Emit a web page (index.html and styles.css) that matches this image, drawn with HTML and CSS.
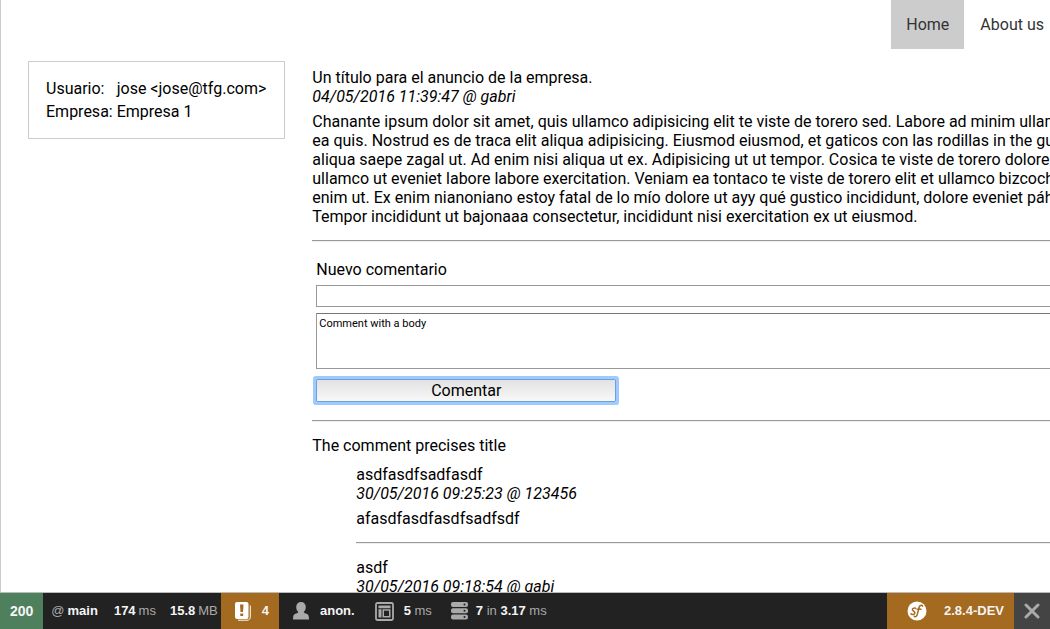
FILE: index.html
```html
<!DOCTYPE html>
<html lang="es">
<head>
<meta charset="utf-8">
<title>Anuncio</title>
<link rel="stylesheet" href="styles.css">
</head>
<body>
<div class="page">
  <nav class="nav">
    <a class="nav-link active" href="#">Home</a>
    <a class="nav-link" href="#">About us</a>
  </nav>
  <div class="columns">
    <aside class="user-card">
      <dl class="user-data">
        <dt>Usuario:</dt><dd>jose &lt;jose@tfg.com&gt;</dd>
        <dt>Empresa:</dt><dd>Empresa 1</dd>
      </dl>
    </aside>
    <main class="content">
      <article>
        <h1 class="title">Un título para el anuncio de la empresa.</h1>
        <p class="meta">04/05/2016 11:39:47 @ gabri</p>
        <p class="text">Chanante ipsum dolor sit amet, quis ullamco adipisicing elit te viste de torero sed. Labore ad minim ullamco<br>
        ea quis. Nostrud es de traca elit aliqua adipisicing. Eiusmod eiusmod, et gaticos con las rodillas in the guisante<br>
        aliqua saepe zagal ut. Ad enim nisi aliqua ut ex. Adipisicing ut ut tempor. Cosica te viste de torero dolore<br>
        ullamco ut eveniet labore labore exercitation. Veniam ea tontaco te viste de torero elit et ullamco bizcoche<br>
        enim ut. Ex enim nianoniano estoy fatal de lo mío dolore ut ayy qué gustico incididunt, dolore eveniet páharo<br>
        Tempor incididunt ut bajonaaa consectetur, incididunt nisi exercitation ex ut eiusmod.</p>
      </article>
      <hr class="rule">
      <form class="comment-form">
        <label class="form-label" for="comment-title">Nuevo comentario</label>
        <input class="field" id="comment-title" type="text">
        <textarea class="field field-body" aria-label="Comentario">Comment with a body</textarea>
        <button class="submit" type="button">Comentar</button>
      </form>
      <hr class="rule">
      <section>
        <h2 class="thread-title">The comment precises title</h2>
        <div class="replies">
          <article>
            <h3 class="title">asdfasdfsadfasdf</h3>
            <p class="meta">30/05/2016 09:25:23 @ 123456</p>
            <p class="text">afasdfasdfasdfsadfsdf</p>
          </article>
          <hr class="rule">
          <article>
            <h3 class="title">asdf</h3>
            <p class="meta">30/05/2016 09:18:54 @ gabi</p>
          </article>
        </div>
      </section>
    </main>
  </div>
</div>
<footer class="toolbar">
  <a class="block status" href="#">200</a>
  <a class="block route" href="#"><span class="unit">@</span> main</a>
  <a class="block time" href="#">174 <span class="unit">ms</span></a>
  <a class="block memory" href="#">15.8 <span class="unit">MB</span></a>
  <a class="block logs" href="#">
    <svg width="16" height="19" viewBox="0 0 16 19"><path d="M3 18.2h9c2 0 3.300-1.300 3.300-3.300V3.500" fill="none" stroke="#fff" stroke-width="1"/><path fill="#fff" fill-rule="evenodd" d="M2 0h9.500a2 2 0 0 1 2 2v13a2 2 0 0 1-2 2H2a2 2 0 0 1-2-2V2a2 2 0 0 1 2-2zM5 2.500l.5 7.500h2.500l.5-7.500zM5.300 11.500V14h2.900v-2.500z"/></svg>
    4</a>
  <a class="block user" href="#">
    <svg width="16" height="18" viewBox="0 0 16 18"><path fill="#aaa" d="M8 0c3 0 4.800 2 4.800 5 0 2-.8 4-2.100 5 .2 1 1.300 1.200 3 1.800C15.500 12.500 16 14 16 17.500H0c0-3.500.5-5 2.300-5.700 1.700-.6 2.800-.8 3-1.800-1.300-1-2.100-3-2.100-5 0-3 1.800-5 4.800-5z"/></svg>
    anon.</a>
  <a class="block twig" href="#">
    <svg width="19" height="19" viewBox="0 0 19 19"><rect x="1" y="1" width="17" height="17" rx="1.500" fill="none" stroke="#aaa" stroke-width="1.800"/><path fill="#aaa" d="M3.500 3.500h12v2.700h-12zM3.500 7.200h3v8.300h-3zM7.500 7.200h8v8.300h-8z"/><path fill="#222" d="M9 8.700h5V14H9z"/></svg>
    <span>5 <span class="unit">ms</span></span></a>
  <a class="block database" href="#">
    <svg width="17" height="18" viewBox="0 0 17 18"><g fill="#aaa"><rect width="17" height="5" rx="2"/><rect y="6.300" width="17" height="5" rx="2"/><rect y="12.600" width="17" height="5" rx="2"/></g><g fill="#222"><circle cx="13.500" cy="2.500" r="1"/><circle cx="13.500" cy="8.800" r="1"/><circle cx="13.500" cy="15.100" r="1"/></g></svg>
    <span>7 <span class="unit">in</span> 3.17 <span class="unit">ms</span></span></a>
  <a class="block version" href="#">
    <svg width="20" height="20" viewBox="0 0 20 20"><circle cx="10" cy="10" r="9.500" fill="#fff"/><g fill="none" stroke="#a46a1f" stroke-width="1.500" stroke-linecap="round" stroke-linejoin="round"><path d="M8.800 7.500C8.400 6.600 5.200 7 5.400 8.700c.2 1.400 2.800 1.500 2.500 3.300-.3 1.700-3 2-3.900.8"/><path d="M15.500 5.300c0-1.600-2.600-1.500-3.300.7-.8 2.500-1.200 5.500-2.100 8-.6 1.700-2.300 2.300-2.900 1.200M10.200 8.300h3.800"/></g></svg>
    2.8.4-DEV</a>
  <button class="close" type="button" aria-label="Close toolbar">
    <svg width="16" height="16" viewBox="0 0 16 16"><path d="M2 2l12 12M14 2L2 14" stroke="#aaa" stroke-width="3" stroke-linecap="round"/></svg>
  </button>
</footer>
</body>
</html>
```
FILE: styles.css
```css
* { box-sizing: border-box; }

body {
  margin: 0;
  background: #fff;
  color: #000;
  font: 16px/19px Roboto, sans-serif;
}

.page {
  height: 100vh;
  overflow: hidden;
  border-left: 1px solid #ccc;
}

.nav {
  display: flex;
  justify-content: flex-end;
  gap: 1px;
  margin-right: -9px;
}

.nav-link {
  padding: 15px;
  color: #333;
  text-decoration: none;
}

.nav-link.active { background: #ccc; }

.columns {
  display: flex;
  align-items: flex-start;
  gap: 27px;
  margin: 12px -16px 0 27px;
}

.user-card {
  flex: none;
  padding: 15px 18px 15px 17px;
  border: 1px solid #ccc;
}

.user-data {
  display: grid;
  grid-template-columns: auto auto;
  column-gap: 4px;
  margin: 0;
  line-height: 23px;
}

.user-data dd { margin: 0; }

.content {
  flex: 1;
  min-width: 0;
  padding-top: 7px;
}

.title,
.thread-title {
  margin: 0;
  font-size: 16px;
  font-weight: 400;
}

.meta {
  margin: 0;
  font-style: italic;
}

.text {
  margin: 6px 0 0;
  white-space: nowrap;
}

.rule {
  height: 2px;
  margin: 14px 0;
  border: 0;
  border-top: 1px solid #999;
  border-bottom: 1px solid #eee;
}

.comment-form {
  display: flex;
  flex-direction: column;
  align-items: flex-start;
  padding: 4px;
}

.form-label { margin-bottom: 6px; }

.field {
  display: block;
  width: 100%;
  height: 22px;
  margin-bottom: 6px;
  padding: 2px;
  border: 1px solid #999;
  border-radius: 0;
  background: #fff;
  color: #000;
  font: 11px/15px Roboto, sans-serif;
}

.field-body {
  height: 56px;
  margin-bottom: 10px;
  border-top-color: #777;
  resize: none;
}

.submit {
  width: 300px;
  height: 23px;
  padding: 0;
  border: 1px solid #6f9fd8;
  border-radius: 1px;
  background: linear-gradient(#e2e2e2, #f8f8f8);
  box-shadow: 0 0 0 3px #9dcaff;
  color: #000;
  font: 16px/20px Roboto, sans-serif;
}

.replies {
  margin: 10px 0 0 44px;
}

.toolbar {
  position: fixed;
  right: 0;
  bottom: 0;
  left: 0;
  display: flex;
  height: 37px;
  border-top: 1px solid #bbb;
  background: #222;
  color: #f5f5f5;
  font: bold 13px/36px "Liberation Sans", Arial, sans-serif;
  white-space: nowrap;
}

.block {
  display: flex;
  align-items: center;
  gap: 10px;
  padding: 0 10px;
  color: inherit;
  text-decoration: none;
}

.unit {
  color: #aaa;
  font-weight: 400;
}

.status {
  background: #4f805d;
  font-size: 14px;
}

.route,
.time,
.memory { gap: 3px; }

.route { padding: 0 6px 0 8px; }

.time { padding: 0 10px; }

.memory { padding: 0 3px 0 4px; }

.logs {
  gap: 11px;
  padding: 0 10px 0 14px;
  background: #a46a1f;
}

.user {
  gap: 11px;
  padding: 0 10px 0 14px;
}

.twig { padding: 0 9px 0 10px; }

.database { gap: 8px; }

.version {
  gap: 17px;
  margin-left: auto;
  padding: 0 10px 0 20px;
  background: #a46a1f;
}

.close {
  display: grid;
  place-items: center;
  width: 36px;
  padding: 0;
  border: 0;
  background: #444;
}
```
